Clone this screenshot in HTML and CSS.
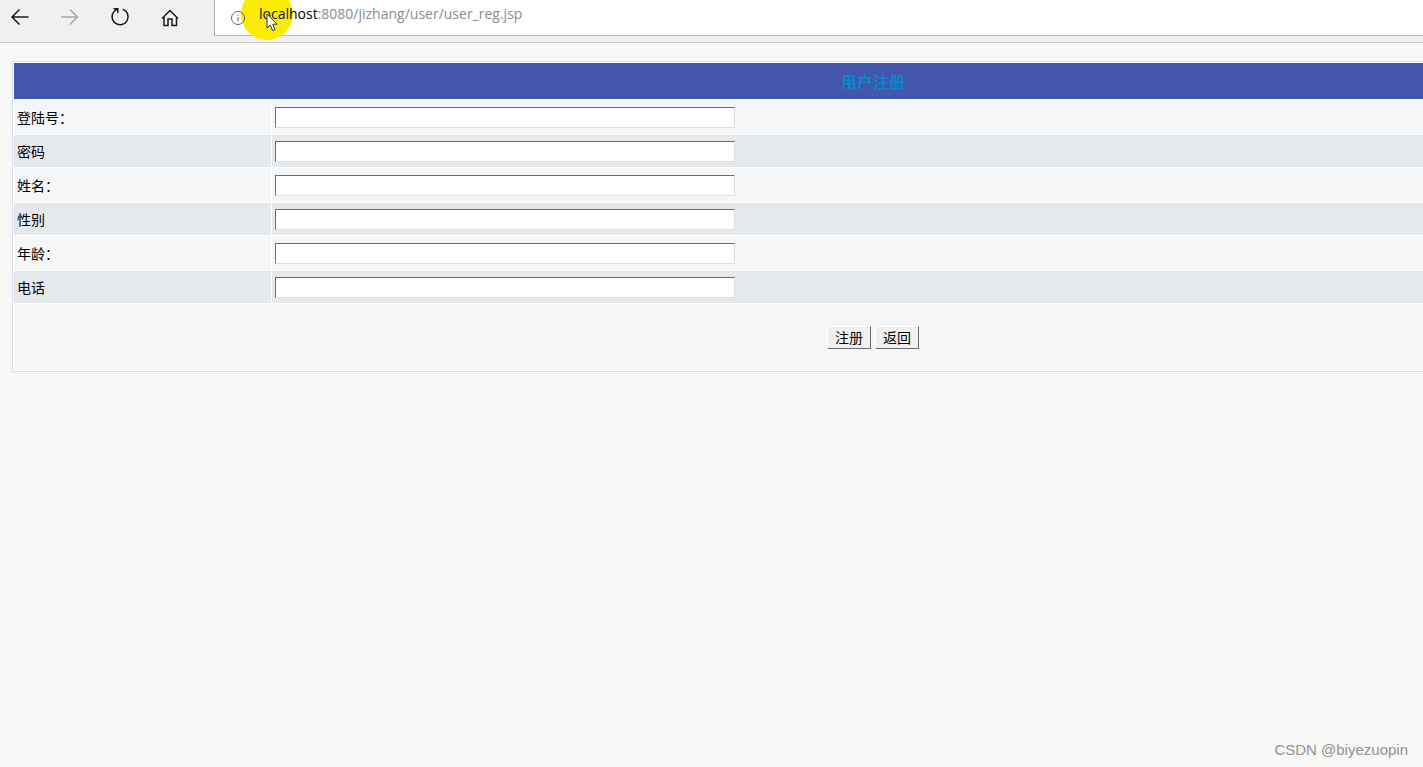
FILE: index.html
```html
<!DOCTYPE html>
<html lang="zh-CN">
<head>
<meta charset="utf-8">
<title>用户注册</title>
<link rel="stylesheet" href="styles.css">
</head>
<body>
<header class="toolbar">
  <nav class="nav">
    <button class="nav-btn" type="button" aria-label="Back"><svg width="20" height="20" viewBox="0 0 20 20"><path d="M18.500 10H1.500M9.500 2.500L2 10l7.500 7.500"/></svg></button>
    <button class="nav-btn nav-btn-off" type="button" aria-label="Forward" disabled><svg width="20" height="20" viewBox="0 0 20 20"><path d="M1 10h16.500M10 2.500l7.500 7.500-7.500 7.500"/></svg></button>
    <button class="nav-btn" type="button" aria-label="Refresh"><svg width="20" height="20" viewBox="0 0 20 20"><path d="M12.800 2.200A8 8 0 1 1 4.500 4L7.500 1.800M3.500 1.700H7.800V6"/></svg></button>
    <button class="nav-btn" type="button" aria-label="Home"><svg width="20" height="20" viewBox="0 0 20 20"><path d="M2 11.500l8-8 8 8M4 10V18.500h4v-6.500h4v6.500h4.500V10"/></svg></button>
  </nav>
  <div class="address">
    <span class="spot"></span>
    <svg class="info" width="16" height="16" viewBox="0 0 16 16"><circle cx="8" cy="8" r="6.500"/><path d="M8 7v4.500M8 4.500v1.200"/></svg>
    <span class="url"><span class="hl">local</span><span class="host">host</span>:8080/jizhang/user/user_reg.jsp</span>
    <svg class="cursor" width="12" height="19" viewBox="0 0 12 19"><path d="M1 1v14l3.200-3 2.300 5.500 2.500-1-2.300-5.300H11z"/></svg>
  </div>
</header>
<main class="page">
  <form>
    <table class="form-table">
      <colgroup><col class="label-col"><col></colgroup>
      <thead><tr class="title"><th colspan="2">用户注册</th></tr></thead>
      <tbody>
        <tr class="light"><td><label for="login">登陆号：</label></td><td><input class="field" id="login" type="text"></td></tr>
        <tr class="dark"><td><label for="pwd">密码</label></td><td><input class="field" id="pwd" type="password"></td></tr>
        <tr class="light"><td><label for="name">姓名：</label></td><td><input class="field" id="name" type="text"></td></tr>
        <tr class="dark"><td><label for="sex">性别</label></td><td><input class="field" id="sex" type="text"></td></tr>
        <tr class="light"><td><label for="age">年龄：</label></td><td><input class="field" id="age" type="text"></td></tr>
        <tr class="dark"><td><label for="tel">电话</label></td><td><input class="field" id="tel" type="text"></td></tr>
        <tr class="actions"><td colspan="2"><div class="buttons"><button class="btn" type="button">注册</button><button class="btn" type="button">返回</button></div></td></tr>
      </tbody>
    </table>
  </form>
</main>
<footer class="credit">CSDN @biyezuopin</footer>
</body>
</html>
```
FILE: styles.css
```css
* { box-sizing: border-box; }
body {
  margin: 0;
  min-height: 100vh;
  display: flex;
  flex-direction: column;
  background: #f8f8f6;
  color: #000;
  font: 14px/20px "Noto Sans CJK SC", sans-serif;
}
.toolbar {
  display: flex;
  align-items: flex-start;
  height: 43px;
  background: #f0f0ee;
  border-bottom: 1px solid #c8c8c8;
}
.nav {
  display: flex;
  gap: 30px;
  width: 214px;
  padding: 7px 0 0 10px;
}
.nav-btn {
  width: 20px;
  height: 20px;
  padding: 0;
  border: 0;
  background: none;
}
.nav-btn svg {
  display: block;
  fill: none;
  stroke: #1a1a1a;
  stroke-width: 1.5;
}
.nav-btn-off svg { stroke: #a8a8a8; }
.address {
  position: relative;
  flex: 1;
  display: flex;
  gap: 13px;
  height: 36px;
  padding-left: 15px;
  background: #fff;
  border-left: 1px solid #b4b4b4;
  border-bottom: 1px solid #bababa;
}
.spot {
  position: absolute;
  left: 26px;
  top: -12px;
  width: 52px;
  height: 52px;
  border-radius: 50%;
  background: #fbec00;
}
.info {
  position: relative;
  margin-top: 10px;
  fill: none;
  stroke: #666;
}
.url {
  position: relative;
  margin-top: 4px;
  color: #8c8c8c;
  font: 14px/20px "Open Sans", "Noto Sans", sans-serif;
}
.hl { color: #10107c; }
.host { color: #000; }
.cursor {
  position: absolute;
  left: 51px;
  top: 13px;
  fill: #fff;
  stroke: #333;
}
.page {
  flex: 1;
  overflow: hidden;
  padding: 18px 0 0 12px;
}
/* The table is wider than the window and runs off its right edge. */
.form-table {
  width: 121vw;
  table-layout: fixed;
  border: 1px solid #d5e0e8;
  border-spacing: 1px;
  background: #fff;
}
.label-col { width: 257px; }
.form-table th, .form-table td { padding: 0 3px; }
.title { height: 36px; }
.title th {
  background: #4156ac;
  color: #0a86cc;
  font-size: 16px;
}
.light { height: 34px; background: #f4f6f8; }
.dark { height: 32px; background: #e5e9eb; }
.field {
  display: block;
  width: 460px;
  height: 21px;
  padding: 0 2px;
  border: 1px solid #dedede;
  border-top-color: #6c6c6c;
  border-left-color: #6c6c6c;
  background: #fff;
}
.actions { height: 66px; background: #f4f6f8; }
.buttons {
  display: flex;
  justify-content: center;
  gap: 4px;
}
.btn {
  width: 44px;
  height: 23px;
  padding: 0;
  border: 1px solid #fff;
  border-right-color: #6c6c6c;
  border-bottom-color: #6c6c6c;
  background: #f0f0f0;
  color: #000;
  font: 14px/20px "Noto Sans CJK SC", sans-serif;
}
.credit {
  padding: 0 15px 7px 0;
  text-align: right;
  color: #929292;
  font: 15px/20px "Liberation Sans", sans-serif;
}
```
